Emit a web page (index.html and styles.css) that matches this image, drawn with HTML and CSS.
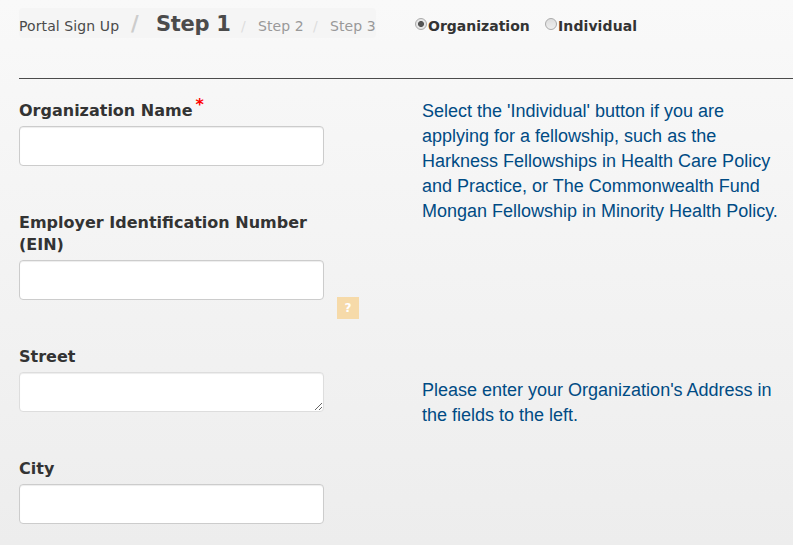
FILE: index.html
```html
<!DOCTYPE html>
<html lang="en">
<head>
  <meta charset="UTF-8" />
  <meta name="viewport" content="width=device-width, initial-scale=1" />
  <title>Portal Sign Up</title>
  <link rel="stylesheet" href="styles.css">
</head>
<body>

<header class="signup-header">
  <ul class="breadcrumb">
    <li class="crumb-home">Portal Sign Up</li>
    <li class="active"><span class="divider">/</span><span class="crumb-text">Step 1</span></li>
    <li class="muted"><span class="divider">/</span><span class="crumb-text">Step 2</span></li>
    <li class="muted"><span class="divider">/</span><span class="crumb-text">Step 3</span></li>
  </ul>
  <div class="account-type">
    <label class="radio-org"><input type="radio" name="type" checked /><span>Organization</span></label>
    <label class="radio-ind"><input type="radio" name="type" /><span>Individual</span></label>
  </div>
</header>

<form class="signup-form">
  <section class="form-row">
    <div class="fields">
      <div class="field">
        <label for="orgName">Organization Name<span class="required">*</span></label>
        <input type="text" id="orgName" />
      </div>
      <div class="field">
        <label for="ein">Employer Identification Number (EIN)</label>
        <input type="text" id="ein" />
        <button type="button" class="btn-help" title="Help">?</button>
      </div>
    </div>
    <p class="help-text">Select the 'Individual' button if you are<br>applying for a fellowship, such as the<br>Harkness Fellowships in Health Care Policy<br>and Practice, or The Commonwealth Fund<br>Mongan Fellowship in Minority Health Policy.</p>
  </section>

  <section class="form-row">
    <div class="fields">
      <div class="field">
        <label for="street">Street</label>
        <textarea id="street"></textarea>
      </div>
      <div class="field">
        <label for="city">City</label>
        <input type="text" id="city" />
      </div>
    </div>
    <p class="help-text help-address">Please enter your Organization's Address in<br>the fields to the left.</p>
  </section>
</form>

</body>
</html>
```

FILE: styles.css
```css
* { box-sizing: border-box; margin: 0; padding: 0; }
body {
  height: 545px;
  overflow: hidden;
  padding-left: 19px;
  font-family: Verdana, 'DejaVu Sans', sans-serif;
  font-size: 14px;
  color: #333;
  background: linear-gradient(#f9f9f9, #ededed) no-repeat;
}
.signup-header {
  display: flex;
  height: 79px;
  padding-top: 8px;
  border-bottom: 1px solid #4b4b4b;
}
.breadcrumb {
  display: flex;
  width: 357px;
  height: 30px;
  list-style: none;
  line-height: 30px;
  background: #f5f5f5;
  border-radius: 4px;
  white-space: nowrap;
  color: #4b4b4b;
}
.breadcrumb li {
  display: flex;
  flex-shrink: 0;
  align-items: baseline;
  padding-top: 3px;
}
.crumb-home {
  width: 112px;
  letter-spacing: 0.1px;
}
.breadcrumb .active {
  width: 107px;
  padding-top: 1px;
  font-size: 21px;
  font-weight: bold;
}
.active .divider {
  width: 25px;
  color: #ccc;
}
.active .crumb-text {
  letter-spacing: -0.3px;
}
.muted {
  width: 72px;
  color: #999;
  letter-spacing: 0.1px;
}
.muted .divider {
  width: 20px;
  padding-left: 3px;
  color: #ddd;
}
.muted:last-child {
  width: 66px;
}
/* account type */
.account-type {
  display: flex;
  margin-left: 39px;
  height: 36px;
  font-weight: bold;
}
.account-type label {
  display: flex;
  align-items: center;
}
.radio-org {
  width: 130px;
}
.radio-ind {
  letter-spacing: 0.1px;
}
.account-type input {
  appearance: none;
  width: 12px;
  height: 12px;
  margin: -4px 1px 0 0;
  border: 1px solid #aaa;
  border-radius: 50%;
  background: linear-gradient(#ddd, #eee);
}
.account-type input:checked {
  background: radial-gradient(circle, #555 0 2.6px, #e6e6e6 3.4px);
}
/* form */
.signup-form {
  padding-top: 21px;
}
.form-row {
  display: grid;
  grid-template-columns: 305px 371px;
  column-gap: 98px;
}
.field {
  position: relative;
  margin-bottom: 46px;
}
.field label {
  display: block;
  margin-bottom: 4px;
  font-size: 16px;
  font-weight: bold;
  line-height: 22px;
}
.field input, .field textarea {
  display: block;
  width: 305px;
  height: 40px;
  padding: 4px 6px;
  background: #fff;
  border: 1px solid #ccc;
  border-radius: 4px;
  box-shadow: inset 0 1px 1px rgba(0,0,0,0.075);
}
.field textarea {
  border-color: #ddd;
  resize: both;
}
.required {
  position: relative;
  top: -6px;
  margin-left: 3px;
  color: #f00;
}
.btn-help {
  position: absolute;
  left: 318px;
  bottom: -19px;
  width: 22px;
  height: 22px;
  border: none;
  background: #f6daa9;
  color: #fff;
  font: bold 12px Verdana, 'DejaVu Sans', sans-serif;
}
.help-text {
  margin-top: -1px;
  font-family: Arial, 'Liberation Sans', sans-serif;
  font-size: 18px;
  line-height: 25px;
  color: #004b84;
  white-space: nowrap;
}
.help-address {
  margin-top: 32px;
}
```
